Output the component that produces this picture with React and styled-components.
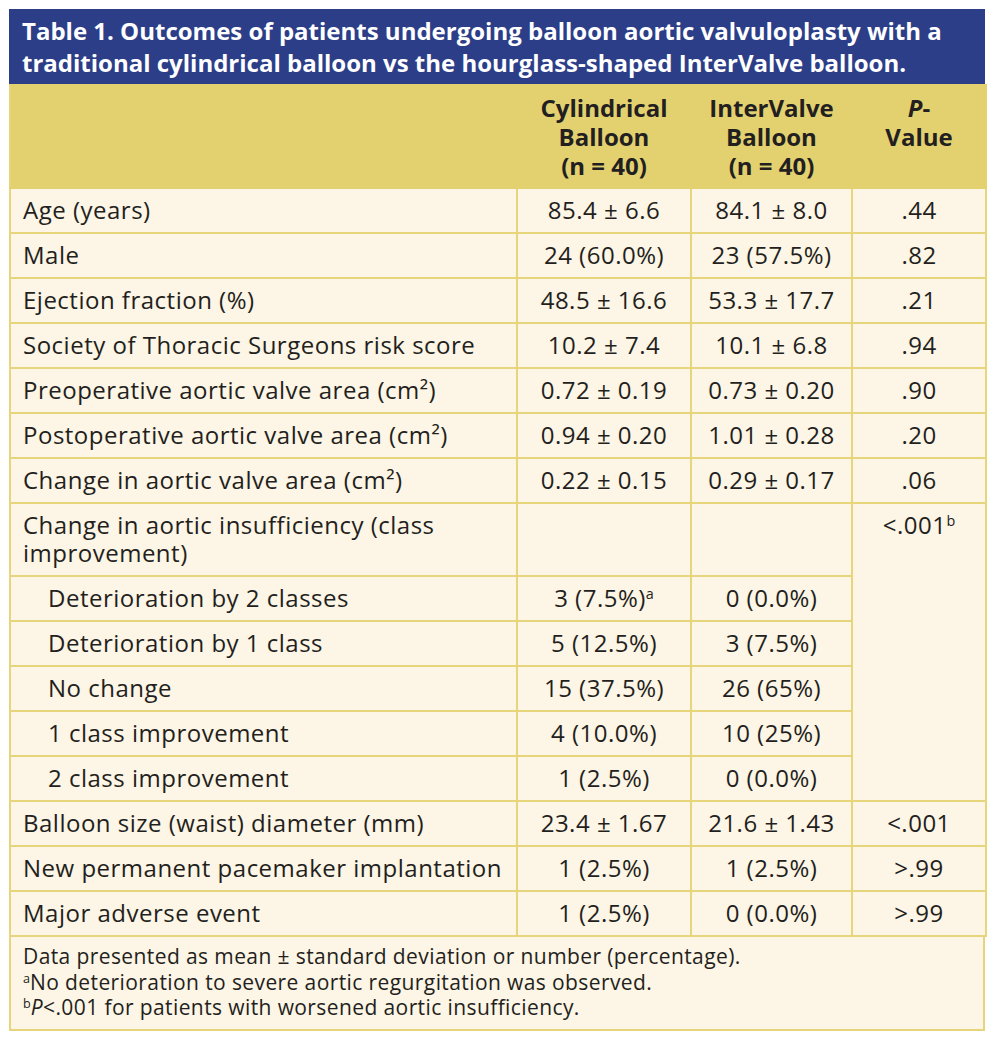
import React from "react";
import styled, { createGlobalStyle } from "styled-components";

const GlobalStyle = createGlobalStyle`
    html, body {
        margin: 0;
        padding: 0;
        background: #ffffff;
    }
    body {
        font-family: "Open Sans", "Liberation Sans", sans-serif;
        color: #231f20;
    }
`;

const rows = [
    { label: "Age (years)", a: "85.4 ± 6.6", b: "84.1 ± 8.0", p: ".44" },
    { label: "Male", a: "24 (60.0%)", b: "23 (57.5%)", p: ".82" },
    { label: "Ejection fraction (%)", a: "48.5 ± 16.6", b: "53.3 ± 17.7", p: ".21" },
    { label: "Society of Thoracic Surgeons risk score", a: "10.2 ± 7.4", b: "10.1 ± 6.8", p: ".94" },
    { label: "Preoperative aortic valve area (cm²)", a: "0.72 ± 0.19", b: "0.73 ± 0.20", p: ".90" },
    { label: "Postoperative aortic valve area (cm²)", a: "0.94 ± 0.20", b: "1.01 ± 0.28", p: ".20" },
    { label: "Change in aortic valve area (cm²)", a: "0.22 ± 0.15", b: "0.29 ± 0.17", p: ".06" },
];

const subRows = [
    { label: "Deterioration by 2 classes", a: "3 (7.5%)", sup: "a", b: "0 (0.0%)" },
    { label: "Deterioration by 1 class", a: "5 (12.5%)", b: "3 (7.5%)" },
    { label: "No change", a: "15 (37.5%)", b: "26 (65%)" },
    { label: "1 class improvement", a: "4 (10.0%)", b: "10 (25%)" },
    { label: "2 class improvement", a: "1 (2.5%)", b: "0 (0.0%)" },
];

const tailRows = [
    { label: "Balloon size (waist) diameter (mm)", a: "23.4 ± 1.67", b: "21.6 ± 1.43", p: "<.001" },
    { label: "New permanent pacemaker implantation", a: "1 (2.5%)", b: "1 (2.5%)", p: ">.99" },
    { label: "Major adverse event", a: "1 (2.5%)", b: "0 (0.0%)", p: ">.99" },
];

function App() {
    return (
        <>
            <GlobalStyle />
            <Wrapper>
                <Caption>
                    Table 1. Outcomes of patients undergoing balloon aortic valvuloplasty with a traditional cylindrical balloon vs the hourglass-shaped InterValve balloon.
                </Caption>
                <Table>
                    <colgroup>
                        <col style={{ width: 507 }} />
                        <col style={{ width: 174 }} />
                        <col style={{ width: 161 }} />
                        <col style={{ width: 134 }} />
                    </colgroup>
                    <thead>
                        <tr>
                            <HeadCell />
                            <HeadCell>
                                <HeadLine>Cylindrical</HeadLine>
                                <HeadLine>Balloon</HeadLine>
                                <HeadLine>(n = 40)</HeadLine>
                            </HeadCell>
                            <HeadCell>
                                <HeadLine>InterValve</HeadLine>
                                <HeadLine>Balloon</HeadLine>
                                <HeadLine>(n = 40)</HeadLine>
                            </HeadCell>
                            <HeadCell>
                                <HeadLine>
                                    <i>P</i>-
                                </HeadLine>
                                <HeadLine>Value</HeadLine>
                            </HeadCell>
                        </tr>
                    </thead>
                    <tbody>
                        {rows.map((r) => (
                            <tr key={r.label}>
                                <LabelCell>{r.label}</LabelCell>
                                <ValueCell>{r.a}</ValueCell>
                                <ValueCell>{r.b}</ValueCell>
                                <ValueCell>{r.p}</ValueCell>
                            </tr>
                        ))}
                        <tr>
                            <LabelCell $top>Change in aortic insufficiency (class improvement)</LabelCell>
                            <ValueCell />
                            <ValueCell />
                            <ValueCell $top rowSpan={6}>
                                &lt;.001<Sup>b</Sup>
                            </ValueCell>
                        </tr>
                        {subRows.map((r) => (
                            <tr key={r.label}>
                                <LabelCell $indent>{r.label}</LabelCell>
                                <ValueCell>
                                    {r.a}
                                    {r.sup && <Sup>{r.sup}</Sup>}
                                </ValueCell>
                                <ValueCell>{r.b}</ValueCell>
                            </tr>
                        ))}
                        {tailRows.map((r) => (
                            <tr key={r.label}>
                                <LabelCell>{r.label}</LabelCell>
                                <ValueCell>{r.a}</ValueCell>
                                <ValueCell>{r.b}</ValueCell>
                                <ValueCell>{r.p}</ValueCell>
                            </tr>
                        ))}
                    </tbody>
                </Table>
                <Notes>
                    <div>Data presented as mean ± standard deviation or number (percentage).</div>
                    <div>
                        <Sup>a</Sup>No deterioration to severe aortic regurgitation was observed.
                    </div>
                    <div>
                        <Sup>b</Sup>
                        <i>P</i>&lt;.001 for patients with worsened aortic insufficiency.
                    </div>
                </Notes>
            </Wrapper>
        </>
    );
}

export default App;

const Wrapper = styled.div`
    width: 976px;
    margin: 9px 0 0 9px;
`;

const Caption = styled.div`
    background-color: #2c3e88;
    color: #ffffff;
    font-weight: 700;
    font-size: 24px;
    line-height: 32px;
    padding: 6px 13px 5px;
`;

const Table = styled.table`
    width: 976px;
    border-collapse: collapse;
    table-layout: fixed;
    background-color: #fdf5e5;
    font-size: 24px;
    line-height: 28px;
    letter-spacing: 0.5px;
`;

const HeadCell = styled.th`
    background-color: #e3d170;
    border: 2px solid #e3d170;
    border-left-color: #e6d57a;
    font-weight: 700;
    letter-spacing: 0;
    padding: 7px 2px;
    text-align: center;
    vertical-align: top;
    height: 103px;
    box-sizing: border-box;
`;

const HeadLine = styled.div`
    height: 29px;
    line-height: 29px;
    white-space: nowrap;
`;

const LabelCell = styled.td`
    border: 2px solid #e6d57a;
    padding: 7px 6px 8px ${(p) => (p.$indent ? "37px" : "12px")};
    vertical-align: ${(p) => (p.$top ? "top" : "middle")};
    text-align: left;
    white-space: ${(p) => (p.$top ? "normal" : "nowrap")};
`;

const ValueCell = styled.td`
    border: 2px solid #e6d57a;
    padding: 7px 2px 8px;
    vertical-align: ${(p) => (p.$top ? "top" : "middle")};
    text-align: center;
    white-space: nowrap;
`;

const Sup = styled.sup`
    font-size: 0.6em;
    line-height: 0;
    vertical-align: 0.55em;
    letter-spacing: 0;
`;

const Notes = styled.div`
    background-color: #fdf5e5;
    border: 2px solid #e6d57a;
    border-top: none;
    font-size: 21px;
    letter-spacing: 0.4px;
    line-height: 25.5px;
    padding: 7px 12px 8px;
`;
